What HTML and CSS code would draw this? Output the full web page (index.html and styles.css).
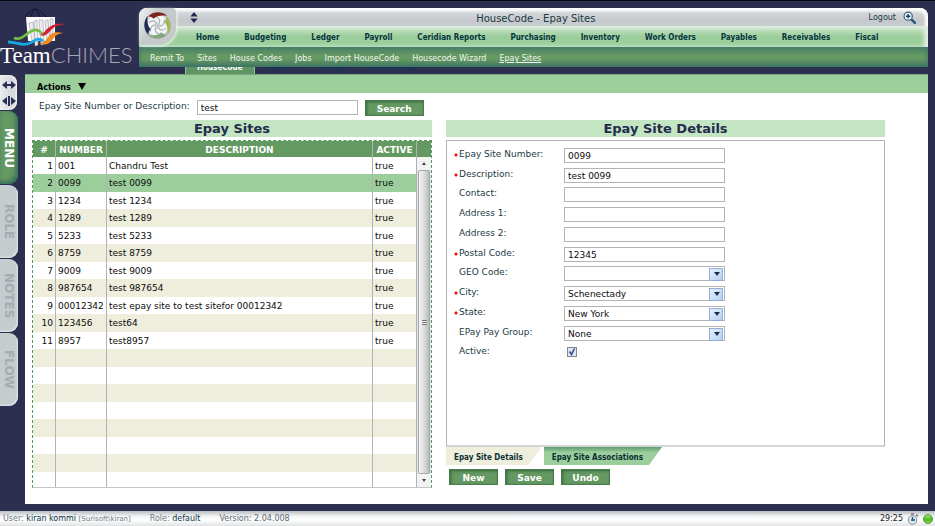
FILE: index.html
```html
<!DOCTYPE html>
<html lang="en">
<head>
<meta charset="utf-8">
<title>HouseCode - Epay Sites</title>
<link rel="stylesheet" href="styles.css">
</head>
<body>
<div class="app">
  <header class="top">
    <div class="brand">
      <svg class="brand-art" viewBox="0 0 60 40" aria-hidden="true">
        <path d="M17 10C20 3 25 1 27 1s8 3 12 9M22 10C24 4 26 1 27 1s4 4 5 9" fill="none" stroke="#15162c"/>
        <path d="M18 9h29v24H20z" fill="#fff"/>
        <g fill="#ececef" stroke="#9a9da6" stroke-width=".6">
          <path d="M21 15l4-1 2 18-3 1z"/><path d="M26 13l3-1 1 25-3 1z"/><path d="M31 12h4l1 24-3 1z"/><path d="M37 13l3-1 2 21-3 1z"/><path d="M42 11h3v20h-2z"/>
        </g>
        <path d="M6 30c9 3 12-6 20-8 6-1 7 4 11 5" fill="none" stroke="#72bf44" stroke-width="2.6"/>
        <path d="M0 34c10 0 14 5 22 1 6-3 8-6 13-2" fill="none" stroke="#16a7df" stroke-width="2.8"/>
        <path d="M30 25c4 4 6-1 9-4 5-5 10-6 19-5-9 1-12 3-15 6-4 5-9 8-13 3z" fill="#d3202f"/>
        <path d="M31 34c6 3 8-5 12-8 4-2 7-2 12-1-6 1-8 3-10 6-3 5-9 8-14 3z" fill="#f18a21"/>
      </svg>
      <div class="wordmark"><span class="team">Team</span><span class="chimes">CHIMES</span></div>
    </div>
    <div class="navbox">
      <div class="titlebar">
        <svg class="updown" viewBox="0 0 8 12" aria-hidden="true"><path d="M4 0l4 5H0zM4 12l4-5H0z" fill="#242850"/></svg>
        <h1>HouseCode - Epay Sites</h1>
        <a class="logout" href="#">Logout</a>
        <svg class="mag" viewBox="0 0 12 12" aria-hidden="true"><path d="M7.500 7.500L11 11" stroke="#2c5a7a" stroke-width="2.400" stroke-linecap="round"/><circle cx="4.800" cy="4.800" r="3.800" fill="#e9f2f8" stroke="#2c5a7a"/><path d="M2.800 4.800h4M4.800 2.800v4" stroke="#173a63" stroke-width="1.300"/></svg>
      </div>
      <nav class="mainnav">
        <a href="#">Home</a><a href="#">Budgeting</a><a href="#">Ledger</a><a href="#">Payroll</a><a href="#">Ceridian Reports</a><a href="#">Purchasing</a><a href="#">Inventory</a><a href="#">Work Orders</a><a href="#">Payables</a><a href="#">Receivables</a><a href="#">Fiscal</a>
      </nav>
      <nav class="subnav">
        <a href="#">Remit To</a><a href="#">Sites</a><a href="#">House Codes</a><a href="#">Jobs</a><a href="#">Import HouseCode</a><a href="#">Housecode Wizard</a><a class="current" href="#">Epay Sites</a>
      </nav>
      <div class="under"><a class="on" href="#">HouseCode</a><a href="#">Reports</a><a href="#">Setup</a><a href="#">Information</a></div>
      <div class="emblem">
        <svg viewBox="0 0 30 30" aria-hidden="true">
          <circle cx="15" cy="15" r="11" fill="#f4f5f6"/>
          <g fill="none" stroke="#a9b0b6" stroke-width="1.200">
            <path d="M6 12c4-3 8-2 9 3"/>
            <path d="M6 12c4-3 8-2 9 3" transform="rotate(60 15 15)"/>
            <path d="M6 12c4-3 8-2 9 3" transform="rotate(120 15 15)"/>
            <path d="M6 12c4-3 8-2 9 3" transform="rotate(180 15 15)"/>
            <path d="M6 12c4-3 8-2 9 3" transform="rotate(240 15 15)"/>
            <path d="M6 12c4-3 8-2 9 3" transform="rotate(300 15 15)"/>
          </g>
          <circle cx="15" cy="15" r="3" fill="#c3c9cc"/>
          <path d="M5 6C10 0 20 0 25 5c-6-1-11 0-14 3C9 6 7 5 5 6z" fill="#7b2420"/>
          <path d="M5 6C10 0 20 0 25 5c-6-1-11 0-14 3C9 6 7 5 5 6z" fill="#a3b559" transform="rotate(90 15 15)"/>
          <path d="M5 6C10 0 20 0 25 5c-6-1-11 0-14 3C9 6 7 5 5 6z" fill="#84a57d" transform="rotate(180 15 15)"/>
          <path d="M5 6C10 0 20 0 25 5c-6-1-11 0-14 3C9 6 7 5 5 6z" fill="#252a55" transform="rotate(270 15 15)"/>
        </svg>
      </div>
    </div>
  </header>

  <div class="middle">
    <aside class="side">
      <div class="resize">
        <svg viewBox="0 0 14 10" aria-hidden="true"><path d="M0 5l5-4v8zM14 5L9 1v8z" fill="#2b2e55"/><path d="M3 5h8" stroke="#2b2e55" stroke-width="2"/></svg>
        <svg viewBox="0 0 14 10" aria-hidden="true"><path d="M0 5l5-4v8zM14 5L9 1v8zM6 0h2v10H6z" fill="#2b2e55"/></svg>
      </div>
      <button class="vtab active" type="button">MENU</button>
      <button class="vtab" type="button">ROLE</button>
      <button class="vtab" type="button">NOTES</button>
      <button class="vtab" type="button">FLOW</button>
    </aside>

    <main class="page">
      <div class="actions"><button type="button">Actions<span class="tri"></span></button></div>
      <form class="search">
        <label for="q">Epay Site Number or Description:</label>
        <input class="box" id="q" type="text" value="test">
        <button class="btn" type="button">Search</button>
      </form>
      <div class="columns">
        <section class="list">
          <h2>Epay Sites</h2>
          <div class="grid">
            <table>
              <colgroup><col class="c-n"><col class="c-num"><col><col class="c-act"></colgroup>
              <thead><tr><th>#</th><th>NUMBER</th><th>DESCRIPTION</th><th>ACTIVE</th></tr></thead>
              <tbody>
                <tr><td>1</td><td>001</td><td>Chandru Test</td><td>true</td></tr>
                <tr class="selected"><td>2</td><td>0099</td><td>test 0099</td><td>true</td></tr>
                <tr><td>3</td><td>1234</td><td>test 1234</td><td>true</td></tr>
                <tr><td>4</td><td>1289</td><td>test 1289</td><td>true</td></tr>
                <tr><td>5</td><td>5233</td><td>test 5233</td><td>true</td></tr>
                <tr><td>6</td><td>8759</td><td>test 8759</td><td>true</td></tr>
                <tr><td>7</td><td>9009</td><td>test 9009</td><td>true</td></tr>
                <tr><td>8</td><td>987654</td><td>test 987654</td><td>true</td></tr>
                <tr><td>9</td><td>00012342</td><td>test epay site to test sitefor 00012342</td><td>true</td></tr>
                <tr><td>10</td><td>123456</td><td>test64</td><td>true</td></tr>
                <tr><td>11</td><td>8957</td><td>test8957</td><td>true</td></tr>
                <tr><td></td><td></td><td></td><td></td></tr>
                <tr><td></td><td></td><td></td><td></td></tr>
                <tr><td></td><td></td><td></td><td></td></tr>
                <tr><td></td><td></td><td></td><td></td></tr>
                <tr><td></td><td></td><td></td><td></td></tr>
                <tr><td></td><td></td><td></td><td></td></tr>
                <tr><td></td><td></td><td></td><td></td></tr>
                <tr class="last"><td></td><td></td><td></td><td></td></tr>
              </tbody>
            </table>
            <div class="scroll">
              <div class="scroll-head"></div>
              <div class="arrow up"></div>
              <div class="thumb"><span class="grip"></span></div>
              <div class="arrow down"></div>
            </div>
          </div>
        </section>

        <section class="details">
          <h2>Epay Site Details</h2>
          <form class="fields">
            <div class="row req"><label for="f1">Epay Site Number:</label><input class="box" id="f1" type="text" value="0099"></div>
            <div class="row req"><label for="f2">Description:</label><input class="box" id="f2" type="text" value="test 0099"></div>
            <div class="row"><label for="f3">Contact:</label><input class="box" id="f3" type="text"></div>
            <div class="row"><label for="f4">Address 1:</label><input class="box" id="f4" type="text"></div>
            <div class="row"><label for="f5">Address 2:</label><input class="box" id="f5" type="text"></div>
            <div class="row req"><label for="f6">Postal Code:</label><input class="box" id="f6" type="text" value="12345"></div>
            <div class="row"><label for="f7">GEO Code:</label><div class="drop"><select class="box" id="f7"><option></option></select></div></div>
            <div class="row req"><label for="f8">City:</label><div class="drop"><select class="box" id="f8"><option>Schenectady</option></select></div></div>
            <div class="row req"><label for="f9">State:</label><div class="drop"><select class="box" id="f9"><option>New York</option></select></div></div>
            <div class="row"><label for="f10">EPay Pay Group:</label><div class="drop"><select class="box" id="f10"><option>None</option></select></div></div>
            <div class="row"><label for="f11">Active:</label><span class="check"><input id="f11" type="checkbox" checked><svg viewBox="0 0 10 10" aria-hidden="true"><path d="M2.500 4.500l2 3 3-6" fill="none" stroke="#35408f" stroke-width="1.500"/></svg></span></div>
          </form>
          <div class="tabs">
            <button class="tab current" type="button">Epay Site Details</button>
            <button class="tab" type="button">Epay Site Associations</button>
          </div>
          <div class="buttons">
            <button class="btn" type="button">New</button>
            <button class="btn" type="button">Save</button>
            <button class="btn" type="button">Undo</button>
          </div>
        </section>
      </div>
    </main>
  </div>

  <footer class="status">
    <span>User: <b>kiran kommi</b> <small>[Surisoft\kiran]</small></span>
    <span>Role: <b>default</b></span>
    <span class="ver">Version: 2.04.008</span>
    <span class="tray">
      <span class="clock">29:25</span>
      <svg class="watch" viewBox="0 0 12 12" aria-hidden="true"><path d="M4 1h3M9 2l2 1" stroke="#777" stroke-width="1.500"/><circle cx="5.500" cy="7" r="4.300" fill="#d9eaf5" stroke="#868c92"/><path d="M5.500 4v4M4 7h4" stroke="#27577a" stroke-width="1.300"/></svg>
      <span class="led"></span>
    </span>
  </footer>
</div>
</body>
</html>
```
FILE: styles.css
```css
* { box-sizing: border-box; }

body {
  margin: 0;
  background: #2d2f50;
  color: #1b3a44;
  font: 9px/12px "DejaVu Sans", sans-serif;
}

button, input, select { font: inherit; margin: 0; }
button { border: 0; cursor: pointer; }
a { color: inherit; text-decoration: none; }
h1, h2 { margin: 0; }

.app {
  display: flex;
  flex-direction: column;
  min-height: 100vh;
  border-top: 1px solid #08080e;
}

/* header */
.top { display: flex; height: 73px; padding: 7px 7px 0 0; }
.brand { width: 139px; flex: none; }
.brand-art { display: block; width: 60px; height: 40px; margin-left: 8px; }
.wordmark { display: flex; align-items: baseline; line-height: 30px; margin-top: -8px; white-space: nowrap; }
.team { font: 23px/30px "Liberation Serif", serif; color: #fff; }
.chimes { font: 300 22px/30px Lato, sans-serif; color: #a5a7b5; }

.navbox { position: relative; flex: 1; min-width: 0; }
.titlebar {
  display: flex;
  align-items: center;
  height: 18px;
  padding: 0 12px 0 51px;
  border-radius: 8px 8px 0 0;
  background: linear-gradient(#fff, #d2d5d8 30%, #c5c9cd 70%, #c8cccf);
  box-shadow: inset -3px 2px 3px #fff;
}
.titlebar h1 { flex: 1; padding: 3px 0 0 5px; text-align: center; font-size: 10px; font-weight: 400; }
.updown { width: 8px; height: 11px; }
.logout { font-size: 8px; padding-top: 2px; }
.mag { width: 13px; height: 13px; margin-left: 7px; }

.mainnav {
  display: flex;
  gap: 25px;
  height: 21px;
  padding-left: 57px;
  font: bold 8px/24px "DejaVu Sans Condensed", "DejaVu Sans", sans-serif;
  color: #063540;
  white-space: nowrap;
  background: linear-gradient(#dfecdf, #b5dab5 25%, #9bce9b 50%, #9bce9b);
  box-shadow: inset -4px 0 4px #e6efe6;
}
.subnav {
  display: flex;
  gap: 13px;
  height: 20px;
  padding-left: 11px;
  font-size: 8px;
  line-height: 23px;
  color: #f0f6ee;
  white-space: nowrap;
  background: linear-gradient(#4d8368, #659962 45%, #659962 60%, #427763);
  box-shadow: inset 0 0 5px #39756b;
}
.current { text-decoration: underline; }
.under {
  display: flex;
  gap: 23px;
  height: 7px;
  padding-left: 46px;
  overflow: hidden;
  font: bold 8px/12px "DejaVu Sans Condensed", "DejaVu Sans", sans-serif;
  color: #173653;
}
.under a { margin-top: -5px; }
.under .on { padding: 0 11px; margin-right: -11px; color: #fff; background: #5e9764; border-right: 1px solid #8fc296; border-left: 1px solid #8fc296; }
.emblem {
  position: absolute;
  left: 0;
  top: 0;
  width: 37px;
  height: 37px;
  padding: 3px 2px 2px 4px;
  border-radius: 8px 4px 18px 4px;
  background: linear-gradient(120deg, #f2f3f4, #c6cacd 40%, #c3c9ca);
  box-shadow: 1px 1px 3px #eef5ee;
}
.emblem svg { display: block; width: 29px; height: 29px; }

/* body */
.middle { display: flex; flex: 1; padding-right: 7px; margin-bottom: 7px; }
.side { width: 25px; flex: none; display: flex; flex-direction: column; gap: 1px; align-items: flex-start; padding-top: 1px; }
.resize {
  display: flex;
  flex-direction: column;
  align-items: center;
  justify-content: space-between;
  width: 17px;
  height: 35px;
  padding: 5px 0 4px;
  border-radius: 0 8px 8px 0;
  background: linear-gradient(90deg, #e8eaec, #cfd2d6);
  box-shadow: inset -1px 0 3px #fff;
}
.resize svg { width: 14px; height: 10px; }
.vtab {
  width: 18px;
  height: 73px;
  padding: 0;
  border-radius: 0 9px 9px 0;
  writing-mode: vertical-rl;
  text-align: center;
  font-size: 12px;
  line-height: 16px;
  font-weight: 700;
  color: #a2aeb2;
  background: #c6cbce;
  box-shadow: inset -1px -1px 2px #e4e7e9;
}
.vtab.active { color: #fff; background: #659962; box-shadow: inset -2px -2px 5px #2f6b5c; }

.page { flex: 1; min-width: 0; background: #fff; }
.actions { height: 19px; background: #9bce9b; border-top: 1px solid #7ba37f; padding-left: 12px; }
.actions button {
  display: flex;
  align-items: center;
  gap: 7px;
  height: 20px;
  padding: 3px 0 0;
  background: none;
  color: #000;
  font: bold 9px/12px "DejaVu Sans Condensed", "DejaVu Sans", sans-serif;
}
.tri { border: 4px solid transparent; border-top: 7px solid #000; border-bottom: 0; }
.search { display: flex; align-items: flex-start; gap: 7px; padding: 7px 0 0 14px; height: 27px; }
.search .btn { width: 59px; }
.box {
  display: block;
  width: 161px;
  height: 15px;
  padding: 1px 3px 0;
  border: 1px solid #b2b4b6;
  border-radius: 0;
  background: #fff;
  color: #0b0b0b;
  outline: 0;
  appearance: none;
}
.btn {
  height: 16px;
  padding: 1px 0 0;
  font-weight: 700;
  color: #fff;
  background: #659962;
  border: 1px solid #4a7d4c;
  box-shadow: inset 1px 1px 3px #34663a;
}

.columns { display: flex; gap: 14px; padding: 0 0 16px 7px; }
.list { flex: 0 1 400px; min-width: 0; }
.details { flex: 0 1 439px; min-width: 0; }
h2 {
  height: 17px;
  font-size: 13px;
  line-height: 18px;
  text-align: center;
  color: #222a4d;
  background: #c3e5c1;
}

.grid {
  display: flex;
  margin-top: 3px;
  border: 1px dashed #4f9a5c;
  border-bottom: 1px solid #c4c6c8;
}
table { flex: 1; border-collapse: separate; border-spacing: 0; table-layout: fixed; width: 100%; color: #0b0b0b; }
.c-n { width: 23px; }
.c-num { width: 51px; }
.c-act { width: 44px; }
th, td { padding: 0 2px; border-right: 1px solid #b0b2b4; white-space: nowrap; overflow: hidden; line-height: 16px; }
th { height: 16px; padding: 2px 0 0; color: #fff; background: #659962; line-height: 14px; }
td { height: 17px; }
td:first-child { text-align: right; }
tbody tr:nth-child(even) td { height: 18px; background: #efeedd; }
tbody tr.selected td { background: #9bce9b; }
tbody tr.last td { height: 15px; }

.scroll { flex: none; width: 14px; display: flex; flex-direction: column; background: #e3e4e5; }
.scroll-head { height: 16px; background: #659962; }
.arrow { height: 13px; display: flex; align-items: center; justify-content: center; background: #f3f3f3; }
.arrow::before { content: ""; border: 2px solid transparent; }
.arrow.up::before { border-bottom: 3px solid #444; border-top: 0; }
.arrow.down::before { border-top: 3px solid #444; border-bottom: 0; }
.thumb {
  flex: 1;
  margin: 0 1px;
  display: flex;
  align-items: center;
  justify-content: center;
  border: 1px solid #a6a8aa;
  border-radius: 2px;
  background: linear-gradient(90deg, #f5f5f5, #dfe0e1 45%, #b9babd);
}
.grip { width: 5px; height: 5px; background: repeating-linear-gradient(#777 0 1px, #eee 1px 2px); }

.fields {
  display: grid;
  grid-template-rows: repeat(11, 1fr);
  height: 307px;
  margin-top: 3px;
  padding: 6px 7px 81px;
  border: 1px solid #b2b4b6;
  border-bottom: 2px solid #d4d5d6;
}
.row { display: flex; align-items: flex-start; }
.row label { width: 110px; flex: none; padding: 1px 0 0 5px; white-space: nowrap; }
.row.req label { background: radial-gradient(circle at 2px 8px, #e8101c 1px, transparent 2px) no-repeat; }
.row > .box, .drop { margin-top: 1px; }
.drop { position: relative; }
.drop::after {
  content: "";
  position: absolute;
  right: 2px;
  top: 2px;
  width: 12px;
  height: 11px;
  border: 1px solid #90b0dc;
  background: linear-gradient(135deg, #e6f0fc, #b7d0f2);
  pointer-events: none;
}
.drop::before {
  content: "";
  position: absolute;
  z-index: 1;
  right: 5px;
  top: 6px;
  border: 3px solid transparent;
  border-top: 4px solid #16304a;
  border-bottom: 0;
  pointer-events: none;
}
.check { position: relative; width: 10px; height: 10px; margin: 3px 0 0 3px; }
.check input { appearance: none; display: block; width: 10px; height: 10px; border: 1px solid #85888b; background: #e1e5ef; }
.check svg { position: absolute; left: 0; top: 0; width: 10px; height: 10px; pointer-events: none; }

.tabs { display: flex; height: 18px; }
.tab {
  padding: 3px 19px 0 8px;
  font: bold 8px/12px "DejaVu Sans Condensed", "DejaVu Sans", sans-serif;
  color: #0c2f35;
  background: linear-gradient(#5f9b72, #9bce9b 30%);
  clip-path: polygon(0 0, 100% 0, calc(100% - 13px) 100%, 0 100%);
}
.tab.current {
  margin-right: 2px;
  text-decoration: none;
  background: linear-gradient(127deg, #efeedd calc(100% - 9px), #b5b5ab calc(100% - 8px));
}
.buttons { display: flex; gap: 7px; padding: 4px 0 0 3px; }
.buttons .btn { width: 49px; }

/* status bar */
.status {
  display: flex;
  align-items: center;
  gap: 19px;
  height: 15px;
  padding: 1px 2px 0 3px;
  font-size: 8px;
  line-height: 14px;
  color: #737a7f;
  white-space: nowrap;
  background: linear-gradient(#b9bdc1, #f2f3f4 35%, #fff 60%, #e0e2e4);
}
.status b { font-weight: 400; color: #103645; }
.status small { font-size: 7px; }
.ver { color: #5e6a74; }
.tray { display: flex; align-items: center; gap: 4px; margin-left: auto; }
.clock { color: #222; }
.watch { width: 12px; height: 12px; }
.led { width: 10px; height: 10px; border-radius: 50%; border: 1px solid #4e9a2e; background: linear-gradient(#a4e57c, #4fb81e 60%, #8bdd55); }
```
